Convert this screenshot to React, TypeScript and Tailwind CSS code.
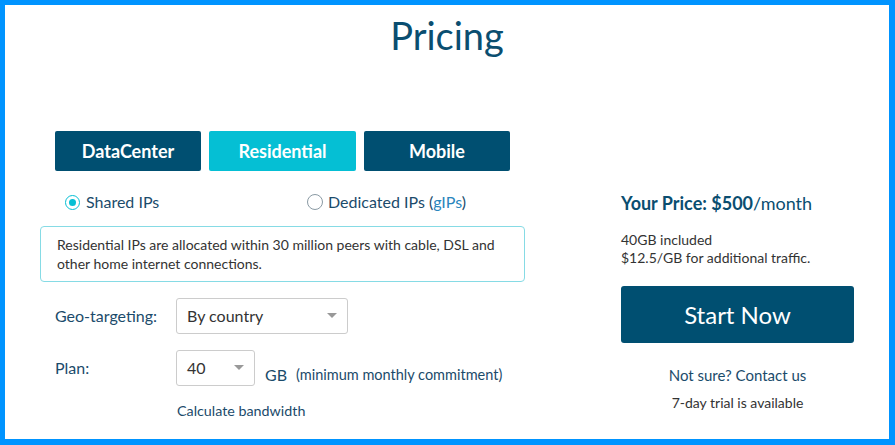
import React from "react";

function Caret() {
  return (
    <svg width="10" height="6" viewBox="0 0 10 6" className="shrink-0">
      <path d="M0 0 L10 0 L5 5 Z" fill="#999" />
    </svg>
  );
}

export default function App() {
  return (
    <div
      className="w-[895px] h-[445px] bg-white border-[#0094ff] border-t-[5px] border-l-[5px] border-r-[6px] border-b-[6px] overflow-hidden"
      style={{ fontFamily: "Lato, 'Open Sans', sans-serif" }}
    >
      <h1 className="pt-[7px] text-center text-[38px] leading-[46px] text-[#0a4e70] font-normal">
        Pricing
      </h1>
      <div className="flex pl-[35px] mt-[73px]">
        {/* Left column */}
        <div className="w-[485px] flex flex-col">
          <div className="flex gap-[8px] pl-[15px]">
            <div className="w-[146px] h-[40px] rounded-[2px] bg-[#004f71] text-white font-bold text-[18px] flex items-center justify-center">
              DataCenter
            </div>
            <div className="w-[147px] h-[40px] rounded-[2px] bg-[#05bfd4] text-white font-bold text-[18px] flex items-center justify-center">
              Residential
            </div>
            <div className="w-[146px] h-[40px] rounded-[2px] bg-[#004f71] text-white font-bold text-[18px] flex items-center justify-center">
              Mobile
            </div>
          </div>
          <div className="flex items-center mt-[21px] h-[20px] text-[16px] text-[#1b4b6b]">
            <div className="flex items-center pl-[25px] w-[267px]">
              <span className="w-[15px] h-[15px] rounded-full border-[1.5px] border-[#05bfd4] flex items-center justify-center">
                <span className="w-[7px] h-[7px] rounded-full bg-[#05bfd4]" />
              </span>
              <span className="ml-[6px]">Shared IPs</span>
            </div>
            <div className="flex items-center">
              <span className="w-[16px] h-[16px] rounded-full border-[1.5px] border-[#8a9aa4]" />
              <span className="ml-[5px]">
                Dedicated IPs (<span className="text-[#2a86bd]">gIPs</span>)
              </span>
            </div>
          </div>
          <div className="mt-[14px] w-[485px] border border-[#86dbe5] rounded-[4px] px-[16px] py-[8px] text-[14px] leading-[19px] text-[#333]">
            Residential IPs are allocated within 30 million peers with cable, DSL and other home internet connections.
          </div>
          <div className="flex items-center mt-[16px] pl-[15px] text-[16px] text-[#1b4b6b]">
            <span className="w-[121px]">Geo-targeting:</span>
            <div className="w-[172px] h-[36px] border border-[#ccc] rounded-[3px] flex items-center justify-between pl-[10px] pr-[10px] text-[#333]">
              <span>By country</span>
              <Caret />
            </div>
          </div>
          <div className="flex items-center mt-[15px] pl-[15px] text-[16px] text-[#1b4b6b]">
            <span className="w-[121px]">Plan:</span>
            <div className="w-[79px] h-[36px] border border-[#ccc] rounded-[3px] flex items-center justify-between pl-[10px] pr-[10px] text-[#333]">
              <span>40</span>
              <Caret />
            </div>
            <span className="ml-[10px] mt-[14px]">GB</span>
            <span className="ml-[9px] mt-[14px] text-[14.5px]">(minimum monthly commitment)</span>
          </div>
          <div className="mt-[13px] pl-[137px] text-[14.3px] text-[#1b4b6b]">Calculate bandwidth</div>
        </div>
        {/* Right column */}
        <div className="ml-[96px] w-[233px] flex flex-col">
          <div className="mt-[60px] text-[18px] leading-[24px] text-[#0a4e70]">
            <span className="font-bold">Your Price: $500</span>/month
          </div>
          <div className="mt-[16px] text-[14px] leading-[18px] text-[#333]">
            <div>40GB included</div>
            <div>$12.5/GB for additional traffic.</div>
          </div>
          <div className="mt-[19px] h-[57px] rounded-[3px] bg-[#004f71] text-white text-[24px] flex items-center justify-center">
            Start Now
          </div>
          <div className="mt-[21px] text-center text-[15px] text-[#1b4b6b]">Not sure? Contact us</div>
          <div className="mt-[5px] text-center text-[14px] text-[#333]">7-day trial is available</div>
        </div>
      </div>
    </div>
  );
}
